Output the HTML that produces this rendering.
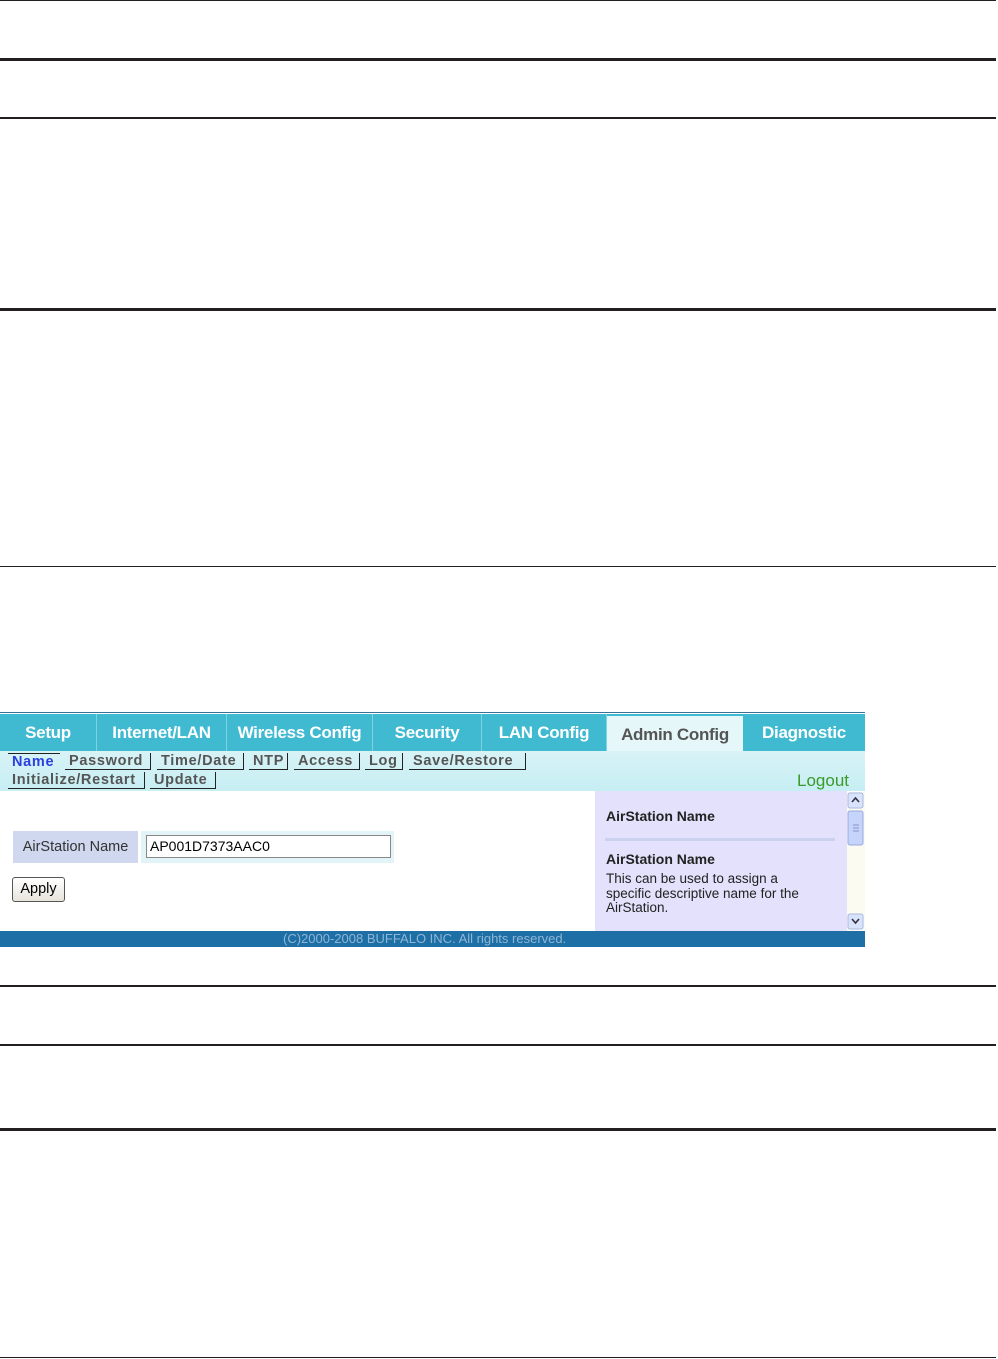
<!DOCTYPE html>
<html><head><meta charset="utf-8"><style>
body{margin:0;width:998px;height:1359px;background:#fff;position:relative;overflow:hidden;font-family:"Liberation Sans",Arial,sans-serif}
.hl{position:absolute;left:0;width:996px;background:#231f20}
.shot{position:absolute;left:0;top:712px;width:865px;height:234px;background:#fff;border-top:1px solid #3a6f96}
.tabs{position:absolute;left:0;top:1px;width:865px;height:37px;background:#3fbad0}
.tab{position:absolute;top:0;height:37px;line-height:37px;color:#fff;font-weight:bold;font-size:17px;text-align:center;border-right:1px solid #7fd3e0;letter-spacing:-0.3px}
.tab.sel{background:#e6f7f9;color:#555;border:none}
.sub{position:absolute;left:0;top:38px;width:865px;height:40px;background:linear-gradient(#d8f3f6,#c6eef3)}
.lk{position:absolute;font-size:14.5px;font-weight:bold;color:#555;border-right:1px solid #222;border-bottom:1px solid #222;padding:0 0 0 4px;line-height:16px;height:17px;letter-spacing:0.7px;white-space:nowrap;box-sizing:border-box}
.content{position:absolute;left:0;top:78px;width:595px;height:140px;background:#fff}
.help{position:absolute;left:595px;top:78px;width:252px;height:140px;background:#e3e1fb}
.foot{position:absolute;left:0;top:218px;width:865px;height:16px;background:#1e6fa5;color:#8fb6d6;font-size:13px;line-height:16px}
</style></head><body>
<div class="hl" style="top:0;height:1px"></div>
<div class="hl" style="top:58px;height:3px"></div>
<div class="hl" style="top:117px;height:2px"></div>
<div class="hl" style="top:308px;height:3px"></div>
<div class="hl" style="top:566px;height:1px"></div>
<div class="hl" style="top:985px;height:2px"></div>
<div class="hl" style="top:1044px;height:2px"></div>
<div class="hl" style="top:1128px;height:3px"></div>
<div class="hl" style="top:1357px;height:1px"></div>

<div class="shot">
 <div class="tabs">
  <div class="tab" style="left:0;width:96px">Setup</div>
  <div class="tab" style="left:97px;width:129px">Internet/LAN</div>
  <div class="tab" style="left:227px;width:145px">Wireless Config</div>
  <div class="tab" style="left:373px;width:108px">Security</div>
  <div class="tab" style="left:482px;width:124px">LAN Config</div>
  <div class="tab sel" style="left:607px;width:136px;top:2px;height:36px">Admin Config</div>
  <div class="tab" style="left:743px;width:122px;border:none">Diagnostic</div>
 </div>
 <div class="sub">
  <div class="lk" style="left:8px;width:52px;top:2px;color:#2a3fe0;border:none;border-top:1px solid #222">Name</div>
  <div class="lk" style="left:65px;width:86px;top:2px">Password</div>
  <div class="lk" style="left:157px;width:87px;top:2px">Time/Date</div>
  <div class="lk" style="left:249px;width:39px;top:2px">NTP</div>
  <div class="lk" style="left:294px;width:66px;top:2px">Access</div>
  <div class="lk" style="left:365px;width:38px;top:2px">Log</div>
  <div class="lk" style="left:409px;width:117px;top:2px">Save/Restore</div>
  <div class="lk" style="left:8px;width:137px;top:21px">Initialize/Restart</div>
  <div class="lk" style="left:150px;width:66px;top:21px">Update</div>
  <div style="position:absolute;right:16px;top:20px;color:#3a9a2a;font-size:17px">Logout</div>
 </div>
 <div class="content">
  <div style="position:absolute;left:13px;top:40px;width:125px;height:32px;background:#cfd8ef;color:#333;font-size:14.5px;line-height:32px;text-align:center">AirStation Name</div>
  <div style="position:absolute;left:141px;top:40px;width:253px;height:32px;background:#e2f4f8">
   <div style="position:absolute;left:5px;top:4px;width:240px;height:21px;border:1px solid #888;background:#fff;font-size:14px;line-height:21px;padding-left:3px">AP001D7373AAC0</div>
  </div>
  <div style="position:absolute;left:12px;top:86px;width:51px;height:23px;border:1px solid #555;border-radius:3px;background:linear-gradient(#fff,#e8e4dc);font-size:14.5px;line-height:22px;text-align:center">Apply</div>
 </div>
 <div class="help">
  <div style="position:absolute;left:11px;top:17px;font-weight:bold;font-size:14px;color:#222">AirStation Name</div>
  <div style="position:absolute;left:10px;top:47px;width:230px;height:3px;background:#c9d3ee"></div>
  <div style="position:absolute;left:11px;top:60px;font-weight:bold;font-size:14px;color:#222">AirStation Name</div>
  <div style="position:absolute;left:11px;top:81px;font-size:13.5px;color:#222;line-height:14.5px">This can be used to assign a<br>specific descriptive name for the<br>AirStation.</div>
 </div>
 <svg style="position:absolute;left:847px;top:79px" width="18" height="139">
  <rect width="18" height="139" fill="#fbfbf2"/>
  <rect x="1" y="1" width="15" height="15" rx="2" fill="#d9e3fb" stroke="#aab8e0"/>
  <path d="M5 10 L8.5 6 L12 10" fill="none" stroke="#334" stroke-width="1.6"/>
  <rect x="1" y="19" width="15" height="34" rx="2" fill="#c6d3fa" stroke="#9aaae0"/>
  <path d="M6 33h6M6 36h6M6 39h6" stroke="#8895c8"/>
  <rect x="1" y="122" width="15" height="15" rx="2" fill="#d9e3fb" stroke="#aab8e0"/>
  <path d="M5 127 L8.5 131 L12 127" fill="none" stroke="#334" stroke-width="1.6"/>
 </svg>
 <div class="foot"><span style="position:absolute;left:283px">(C)2000-2008 BUFFALO INC. All rights reserved.</span></div>
</div>
</body></html>
